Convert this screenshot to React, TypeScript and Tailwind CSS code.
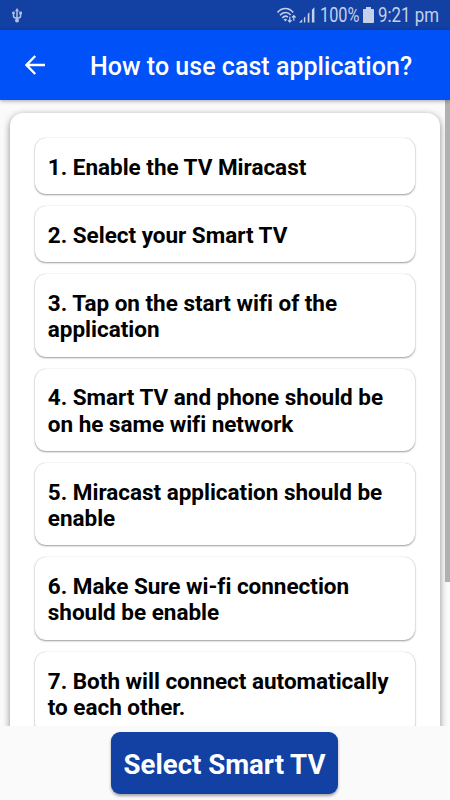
const steps = [
  "1. Enable the TV Miracast",
  "2. Select your Smart TV",
  "3. Tap on the start wifi of the application",
  "4. Smart TV and phone should be on he same wifi network",
  "5. Miracast application should be enable",
  "6. Make Sure wi-fi connection should be enable",
  "7. Both will connect automatically to each other.",
];

const StatusBar = () => {
  return (
    <div className="flex h-[30px] shrink-0 items-center bg-[#1241a3] pl-[12px] pr-[11px] text-[#c5d0e9]">
      {/* usb */}
      <svg width="11" height="16" viewBox="0 0 11 16" fill="none" stroke="currentColor" strokeWidth="1.5" className="mt-[2px] opacity-90">
        <path d="M5 2v11M1.5 5v2.8c0 1.5.8 2.2 2.2 2.2h2.6c1.5 0 2.3-.7 2.3-2.2V5" />
        <path d="M5 0 7 3.2H3z" fill="currentColor" stroke="none" />
        <circle cx="1.5" cy="5" r="1.4" fill="currentColor" stroke="none" />
        <path d="M7.2 3.6h2.7v2.7H7.2z" fill="currentColor" stroke="none" />
        <circle cx="5" cy="12.4" r="2" fill="currentColor" stroke="none" />
      </svg>
      <div className="ml-auto flex items-center">
        {/* wifi with transfer arrows */}
        <svg width="20" height="17" viewBox="0 0 20 17" fill="none" stroke="currentColor" strokeWidth="1.6">
          <path d="M.6 5.4C4.6.1 12.1.1 16.1 5.4M3 8.3c2.9-3.6 7.8-3.6 10.7-.3M5.3 11.1c1.6-2 4-2.2 5.6-1" />
          <path d="M6.6 12.4q1.8-1.2 3.5 0L8.4 14.6z" fill="currentColor" stroke="none" />
          <path d="M12.8 9.8V15M11 13.2l1.8 1.9 1.8-1.9M16.8 13.8V8.6M15 10.5l1.8-1.9 1.8 1.9" strokeWidth="1.2" />
        </svg>
        <svg width="16" height="17" viewBox="0 0 16 17" fill="currentColor" className="ml-[2px]">
          <path d="M0 15.5 3.2 12.3v3.2zM4.9 10.8 6.3 9.4v6.1H4.9zM8.7 7 10.4 5.3v10.2H8.7zM12.9 2.8 15.4.3v15.2h-2.5z" />
        </svg>
        <span className="ml-[5px] mt-[2px] w-[40px] origin-left scale-x-[0.835] whitespace-nowrap text-[19.5px] leading-none">100%</span>
        <svg width="11" height="16" viewBox="0 0 11 16" fill="currentColor" className="ml-[3px]">
          <path d="M3 0h5v2h2.2q.8 0 .8.8v12.4q0 .8-.8.8H.8q-.8 0-.8-.8V2.8Q0 2 .8 2H3z" />
        </svg>
        <span className="ml-[4px] mt-[2px] w-[61px] origin-left scale-x-[0.865] whitespace-nowrap text-[19.5px] leading-none">9:21 pm</span>
      </div>
    </div>
  );
};

const App = () => {
  return (
    <div className="flex h-[800px] w-[450px] flex-col overflow-hidden bg-[#fafafa] font-['Roboto',sans-serif]">
      <StatusBar />
      <header className="z-10 flex h-[70px] shrink-0 items-center bg-[#0051f8] pl-[25px] text-white shadow-[0_1px_4px_rgba(0,0,0,0.35)]">
        <svg width="20" height="20" viewBox="0 0 20 20" fill="none" stroke="currentColor" strokeWidth="2.4">
          <path d="M20 10H2M10.2 1 1.5 10l8.7 9" />
        </svg>
        <h1 className="ml-[45px] pt-[3px] text-[25px] font-medium leading-[30px] tracking-[0.03px] whitespace-nowrap">How to use cast application?</h1>
      </header>

      <main className="flex h-[626px] shrink-0 items-start overflow-hidden pl-[10px] pt-[13px]">
        <div className="flex h-[660px] w-[430px] shrink-0 flex-col gap-[12px] rounded-[13px] bg-white px-[25px] pt-[25px] shadow-[0_2px_7px_rgba(0,0,0,0.45)]">
          {steps.map((step) => (
            <div
              key={step}
              className="rounded-[11px] bg-white pl-[12.8px] pr-[13px] pb-[14px] pt-[15.8px] text-[22.5px] font-bold leading-[26.3px] tracking-[-0.02px] text-black shadow-[0_1px_2px_rgba(0,0,0,0.38),0_0_1px_rgba(0,0,0,0.25)]"
            >
              {step}
            </div>
          ))}
        </div>
        <div className="-mt-[13px] ml-[5px] h-[482px] w-[5px] bg-[#b0b0b0]" />
      </main>

      <footer className="flex h-[74px] shrink-0 justify-center pt-[6px]">
        <button className="mr-px h-[62px] w-[227px] rounded-[9px] bg-[#1241a3] pt-[4px] text-[27.6px] font-bold whitespace-nowrap text-white shadow-[0_2px_3px_rgba(0,0,0,0.35)]">
          Select Smart TV
        </button>
      </footer>
    </div>
  );
};

export default App;
